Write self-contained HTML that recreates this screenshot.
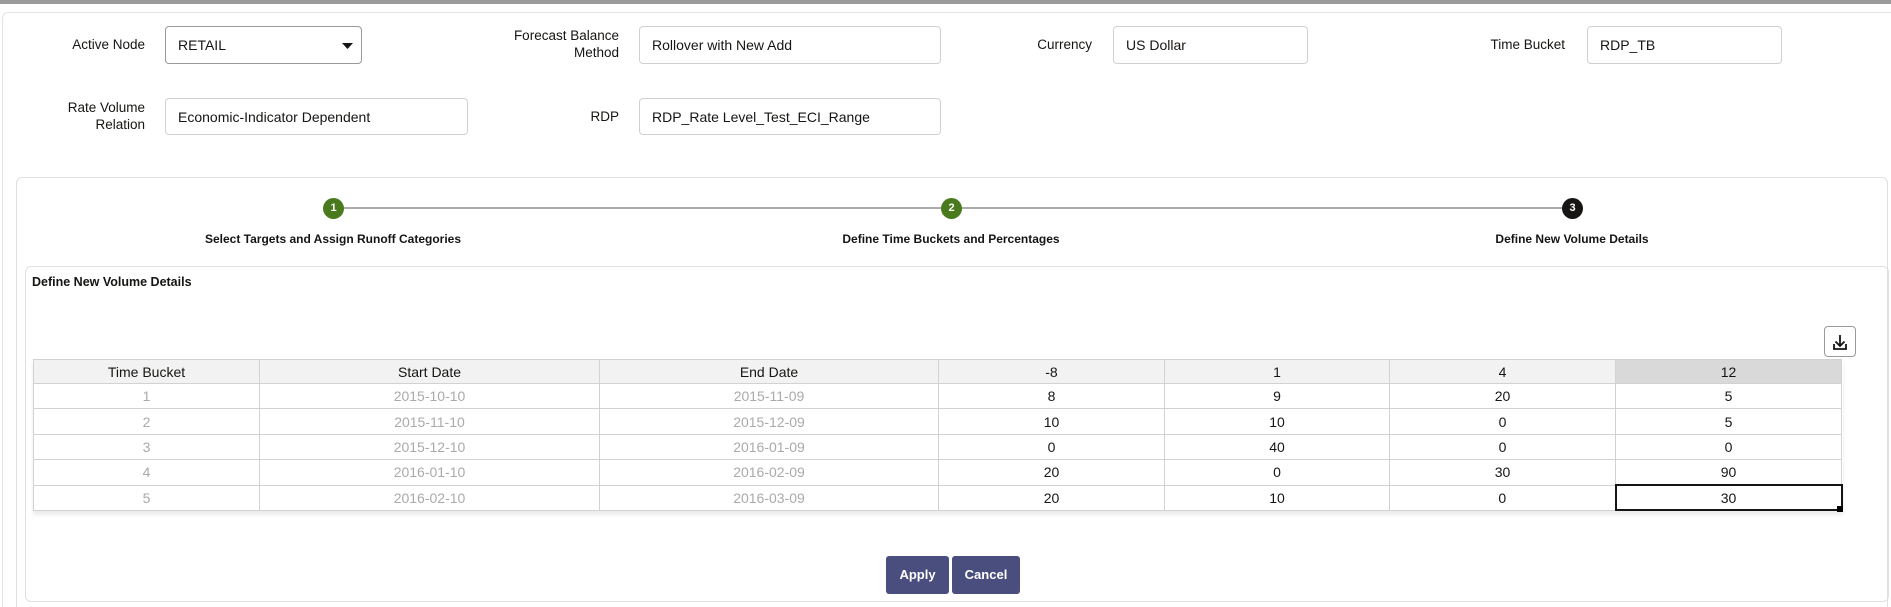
<!DOCTYPE html>
<html style="height:607px;overflow:hidden"><head><meta charset="utf-8"><style>
*{box-sizing:border-box;margin:0;padding:0}
html{width:1891px;height:607px;overflow:hidden}
body{width:1891px;height:607px;background:#fff;font-family:"Liberation Sans",Arial,sans-serif;color:#161513;position:relative;overflow:hidden}
.abs{position:absolute}
.topbar{left:0;top:0;width:1891px;height:4px;background:#9a9a9a}
.outer{left:2px;top:12px;width:1895px;height:600px;border:1px solid #e4e4e4;border-radius:6px}
.lbl{position:absolute;font-size:13.5px;text-align:right;line-height:17px;color:#161513}
.box{position:absolute;border:1px solid #d0d0d0;border-radius:4px;font-size:14px;padding-left:12px;display:flex;align-items:center;background:#fff}
.inner{left:16px;top:177px;width:1872px;height:440px;border:1px solid #e0e0e0;border-radius:6px}
.circ{position:absolute;width:21px;height:21px;border-radius:50%;color:#fff;font-size:11px;font-weight:bold;text-align:center;line-height:21px;top:198px}
.slbl{position:absolute;top:232px;font-size:12px;font-weight:bold;width:400px;text-align:center}
.dpanel{left:25px;top:266px;width:1864px;height:336px;border:1px solid #e0e0e0;border-radius:6px}
table{position:absolute;left:33px;top:359px;border-collapse:collapse;font-size:14px;box-shadow:0 4px 4px rgba(0,0,0,.08)}
td,th{border:1px solid #d2d2d2;text-align:center;font-weight:normal;height:25.4px;padding:0}
th{background:#f2f2f2;height:24px}
td.g{color:#aaa}
.btn{position:absolute;top:556px;height:38px;background:#4a4e7e;color:#fff;font-size:13px;font-weight:bold;border-radius:3px;text-align:center;line-height:38px}
</style></head><body>
<div class="abs topbar"></div>
<div class="abs outer"></div>

<div class="lbl" style="right:1746px;top:36px">Active Node</div>
<div class="box" style="left:165px;top:26px;width:197px;height:38px;border-color:#9a9a9a">RETAIL
<svg class="abs" style="left:176px;top:16px" width="11" height="7"><path d="M0 0H11L5.5 6Z" fill="#161513"/></svg></div>

<div class="lbl" style="right:1272px;top:27px">Forecast Balance<br>Method</div>
<div class="box" style="left:639px;top:26px;width:302px;height:38px">Rollover with New Add</div>

<div class="lbl" style="right:799px;top:36px">Currency</div>
<div class="box" style="left:1113px;top:26px;width:195px;height:38px">US Dollar</div>

<div class="lbl" style="right:326px;top:36px">Time Bucket</div>
<div class="box" style="left:1587px;top:26px;width:195px;height:38px">RDP_TB</div>

<div class="lbl" style="right:1746px;top:99px">Rate Volume<br>Relation</div>
<div class="box" style="left:165px;top:98px;width:303px;height:37px">Economic-Indicator Dependent</div>

<div class="lbl" style="right:1272px;top:108px">RDP</div>
<div class="box" style="left:639px;top:98px;width:302px;height:37px">RDP_Rate Level_Test_ECI_Range</div>

<div class="abs inner"></div>
<div class="abs" style="left:333px;top:207px;width:1239px;height:2px;background:#ababab"></div>
<div class="circ" style="left:323px;background:#4a7a1e">1</div>
<div class="circ" style="left:941px;background:#4a7a1e">2</div>
<div class="circ" style="left:1562px;background:#161513">3</div>
<div class="slbl" style="left:133px">Select Targets and Assign Runoff Categories</div>
<div class="slbl" style="left:751px">Define Time Buckets and Percentages</div>
<div class="slbl" style="left:1372px">Define New Volume Details</div>

<div class="abs dpanel"></div>
<div class="abs" style="left:32px;top:275px;font-size:12.5px;font-weight:bold">Define New Volume Details</div>

<div class="abs" style="left:1824px;top:326px;width:32px;height:31px;border:1px solid #9a9a9a;border-radius:4px">
<svg width="30" height="29" viewBox="0 0 30 29"><path d="M15 8V19M10.5 14.5L15 19L19.5 14.5M9 17V22H21V17" stroke="#161513" stroke-width="1.8" fill="none"/></svg></div>

<table>
<tr><th style="width:226px">Time Bucket</th><th style="width:340px">Start Date</th><th style="width:339px">End Date</th><th style="width:226px">-8</th><th style="width:225px">1</th><th style="width:226px">4</th><th style="width:226px;background:#d9d9d9">12</th></tr>
<tr><td class="g">1</td><td class="g">2015-10-10</td><td class="g">2015-11-09</td><td>8</td><td>9</td><td>20</td><td>5</td></tr>
<tr><td class="g">2</td><td class="g">2015-11-10</td><td class="g">2015-12-09</td><td>10</td><td>10</td><td>0</td><td>5</td></tr>
<tr><td class="g">3</td><td class="g">2015-12-10</td><td class="g">2016-01-09</td><td>0</td><td>40</td><td>0</td><td>0</td></tr>
<tr><td class="g">4</td><td class="g">2016-01-10</td><td class="g">2016-02-09</td><td>20</td><td>0</td><td>30</td><td>90</td></tr>
<tr><td class="g">5</td><td class="g">2016-02-10</td><td class="g">2016-03-09</td><td>20</td><td>10</td><td>0</td><td style="border:2px solid #161513">30</td></tr>
</table>
<div class="abs" style="left:1837px;top:506px;width:6px;height:6px;background:#000"></div>

<div class="btn" style="left:886px;width:63px">Apply</div>
<div class="btn" style="left:952px;width:68px">Cancel</div>
</body></html>
